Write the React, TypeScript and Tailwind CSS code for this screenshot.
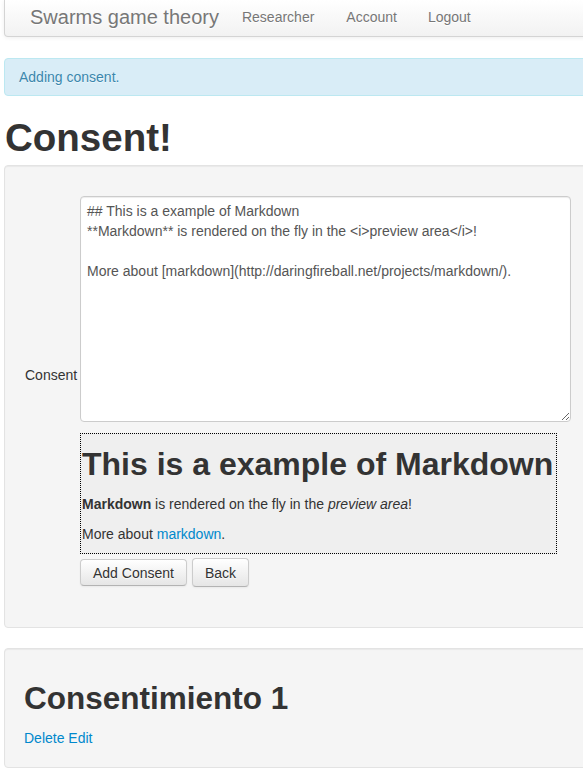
import React from "react";

const btn =
  "inline-flex items-center justify-center px-[12px] text-[14px] leading-[20px] text-[#333] rounded-[4px] border border-[#cccccc] border-b-[#b3b3b3] bg-linear-to-b from-white to-[#e6e6e6] shadow-[inset_0_1px_0_rgba(255,255,255,0.2),0_1px_2px_rgba(0,0,0,0.05)] [text-shadow:0_1px_1px_rgba(255,255,255,0.75)]";

export default function App() {
  return (
    <div
      className="w-[583px] min-h-[769px] overflow-hidden bg-white text-[14px] leading-[20px] text-[#333]"
      style={{ fontFamily: '"Liberation Sans", Arial, sans-serif' }}
    >
      <div className="w-[640px] pl-[4px]">
        {/* Navbar */}
        <div className="h-[37px] flex items-start border-x border-b border-[#d4d4d4] rounded-b-[4px] bg-linear-to-b from-white to-[#f2f2f2] shadow-[0_1px_4px_rgba(0,0,0,0.065)]">
          <a className="ml-[25px] pt-[7px] text-[20px] leading-[20px] text-[#777] [text-shadow:0_1px_0_#fff]">
            Swarms game theory
          </a>
          <div className="ml-[23px] pt-[7px] flex gap-[31px] text-[14px] leading-[20px] text-[#777] [text-shadow:0_1px_0_#fff]">
            <a>Researcher</a>
            <a className="ml-[1px]">Account</a>
            <a>Logout</a>
          </div>
        </div>

        {/* Alert */}
        <div className="mt-[21px] h-[38px] border border-[#bce8f1] bg-[#d9edf7] rounded-[4px] pl-[14px] pt-[8px] text-[#3a87ad] [text-shadow:0_1px_0_rgba(255,255,255,0.5)]">
          Adding consent.
        </div>

        <h1 className="mt-[22px] mb-[7px] ml-[1px] text-[38.5px] leading-[40px] font-bold text-[#333]">
          Consent!
        </h1>

        {/* Well 1 */}
        <div className="border border-[#e3e3e3] bg-[#f5f5f5] rounded-[4px] shadow-[inset_0_1px_1px_rgba(0,0,0,0.05)] pl-[19px] pt-[30px] pb-[40px]">
          <div className="flex items-center">
            <label className="w-[56px] pl-[1px] text-[14px]">Consent</label>
            <div className="flex flex-col">
              <textarea
                className="w-[491px] h-[226px] border border-[#cccccc] rounded-[4px] bg-white px-[6px] py-[4px] text-[14px] leading-[20px] text-[#555] shadow-[inset_0_1px_1px_rgba(0,0,0,0.075)] outline-none"
                style={{ fontFamily: '"Liberation Sans", Arial, sans-serif' }}
                defaultValue={
                  "## This is a example of Markdown\n**Markdown** is rendered on the fly in the <i>preview area</i>!\n\nMore about [markdown](http://daringfireball.net/projects/markdown/)."
                }
              />
              <div className="mt-[11px] w-[477px] border border-dotted border-black bg-[#efefef] pl-[1px]">
                <h2 className="mt-[10px] mb-[10px] text-[32px] leading-[40px] font-bold whitespace-nowrap">
                  This is a example of Markdown
                </h2>
                <p className="mb-[10px]">
                  <strong>Markdown</strong> is rendered on the fly in the <i>preview area</i>!
                </p>
                <p className="mb-[9px]">
                  More about <a className="text-[#0088cc]">markdown</a>.
                </p>
              </div>
            </div>
          </div>
          <div className="ml-[56px] mt-[4px] flex items-center gap-[5px]">
            <button className={btn + " h-[27px]"}>Add Consent</button>
            <a className={btn + " h-[29px]"}>Back</a>
          </div>
        </div>

        {/* Well 2 */}
        <div className="mt-[20px] border border-[#e3e3e3] bg-[#f5f5f5] rounded-[4px] shadow-[inset_0_1px_1px_rgba(0,0,0,0.05)] px-[19px] py-[19px]">
          <h2 className="mt-[10px] mb-[10px] text-[31.5px] leading-[40px] font-bold">
            Consentimiento 1
          </h2>
          <div>
            <a className="text-[#0088cc]">Delete</a> <a className="text-[#0088cc]">Edit</a>
          </div>
        </div>
      </div>
    </div>
  );
}
